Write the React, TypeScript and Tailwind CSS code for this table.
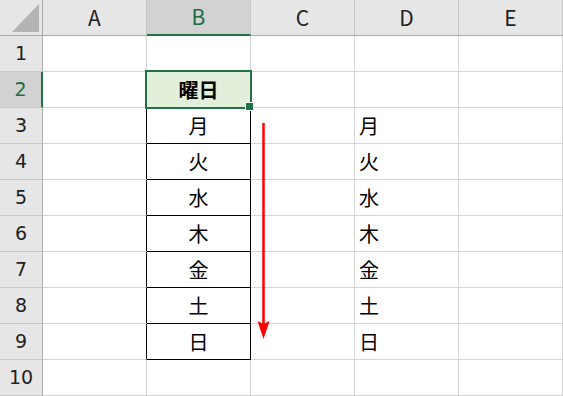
import React from 'react';

const COLS = ['A', 'B', 'C', 'D', 'E'];
const DAYS = ['月', '火', '水', '木', '金', '土', '日'];
const ROWS = Array.from({ length: 10 }, (_, i) => i + 1);

const CJK = "font-['Noto_Sans_CJK_JP','Noto_Sans_CJK_SC',sans-serif]";
const HEAD_FONT = "font-['Noto_Sans_CJK_JP',sans-serif]";
const NUM_FONT = "font-['DejaVu_Sans',sans-serif]";

// 値の取得：B2 が見出し、B列と D列に曜日
function cellValue(row: number, col: string) {
  if (row === 2 && col === 'B') return '曜日';
  if (row >= 3 && row <= 9 && (col === 'B' || col === 'D')) return DAYS[row - 3];
  return '';
}

function Cell({ row, col }: { row: number; col: string }) {
  const inTable = row >= 3 && row <= 9;
  const right = inTable && (col === 'A' || col === 'B') ? 'border-r-black' : 'border-r-[#d4d4d4]';
  const bottom = inTable && col === 'B' ? 'border-b-black' : 'border-b-[#d4d4d4]';
  const isHeader = row === 2 && col === 'B';
  const align = col === 'D' ? 'justify-start pl-[4px]' : 'justify-center';
  return (
    <div
      className={`flex items-center border-r border-b ${right} ${bottom} ${align} ${
        isHeader ? 'bg-[#e2efda] font-bold' : 'bg-white'
      } text-[20px] text-black ${CJK}`}
    >
      {cellValue(row, col)}
    </div>
  );
}

export default function App() {
  return (
    <div className="relative w-[563px] h-[396px] overflow-hidden bg-white">
      <div className="grid grid-cols-[43px_repeat(5,104px)] grid-rows-[repeat(11,36px)]">
        {/* 左上の全選択ボタン */}
        <div className="relative bg-[#e6e6e6] border-r border-b border-r-[#ababab] border-b-[#ababab]">
          <svg className="absolute left-0 top-0" width="42" height="35">
            <polygon points="12,32 39,32 39,4" fill="#b4b4b4" />
          </svg>
        </div>

        {/* 列見出し */}
        {COLS.map((c) => (
          <div
            key={c}
            className={`flex items-center justify-center border-r border-r-[#c6c6c6] ${
              c === 'B'
                ? 'bg-[#d2d2d2] border-b-2 border-b-[#217346] text-[#1e6b41]'
                : 'bg-[#e6e6e6] border-b border-b-[#ababab] text-[#222]'
            } text-[21px] ${HEAD_FONT}`}
          >
            {c}
          </div>
        ))}

        {/* 行 */}
        {ROWS.map((r) => (
          <React.Fragment key={r}>
            <div
              className={`flex items-center justify-center border-b border-b-[#c8c8c8] ${
                r === 2
                  ? 'bg-[#d2d2d2] border-r-2 border-r-[#217346] text-[#1e6b41]'
                  : 'bg-[#e6e6e6] border-r border-r-[#ababab] text-[#222]'
              } text-[19px] ${NUM_FONT}`}
            >
              {r}
            </div>
            {COLS.map((c) => (
              <Cell key={c} row={r} col={c} />
            ))}
          </React.Fragment>
        ))}
      </div>

      {/* アクティブセル B2 の枠とフィルハンドル */}
      <div className="absolute left-[145px] top-[70px] w-[107px] h-[39px] border-2 border-[#217346] pointer-events-none" />
      <div className="absolute left-[245px] top-[102px] w-[9px] h-[9px] bg-[#217346] border border-white" />

      {/* 赤い矢印 */}
      <svg className="absolute left-0 top-0 pointer-events-none" width="563" height="396">
        <line x1="263.5" y1="123" x2="263.5" y2="324" stroke="#ff0000" strokeWidth="2.5" />
        <polygon points="257.5,321 263.5,324 269.5,321 263.5,339" fill="#ff0000" />
      </svg>
    </div>
  );
}
